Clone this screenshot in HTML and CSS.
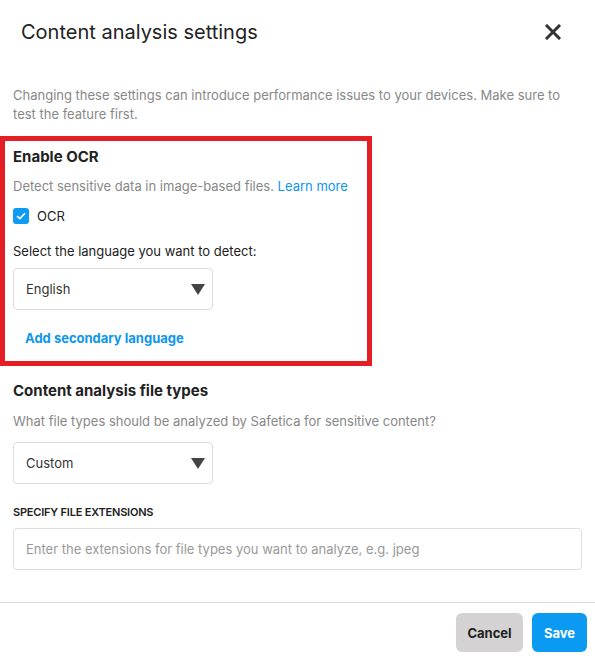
FILE: index.html
```html
<!DOCTYPE html>
<html lang="en">
<head>
  <meta charset="UTF-8">
  <meta name="viewport" content="width=device-width, initial-scale=1.0">
  <title>Content analysis settings</title>
  <link rel="stylesheet" href="styles.css">
</head>

<body>
  <div class="header">
    <h1>Content analysis settings</h1>
    <button class="close" aria-label="Close">
      <svg width="16" height="16" viewBox="0 0 16 16">
        <path d="M2 2 L14 14 M14 2 L2 14" stroke="#333" stroke-width="3" stroke-linecap="square"/>
      </svg>
    </button>
  </div>

  <div class="content">
    <p class="intro">Changing these settings can introduce performance issues to your devices. Make sure to test the feature first.</p>

    <!-- OCR section (highlighted) -->
    <div class="ocr-section">
      <h2>Enable OCR</h2>
      <p class="hint">Detect sensitive data in image-based files. <a href="#">Learn more</a></p>
      <label class="check-row">
        <span class="checkbox">
          <svg width="10" height="8" viewBox="0 0 10 8">
            <path d="M1 4 L3.8 6.6 L9 1.2" stroke="#fff" stroke-width="1.6" fill="none"/>
          </svg>
        </span>
        OCR
      </label>
      <p class="label">Select the language you want to detect:</p>
      <div class="select">
        <span>English</span>
        <span class="arrow"></span>
      </div>
      <a href="#" class="add-link">Add secondary language</a>
    </div>

    <h2 class="section-title">Content analysis file types</h2>
    <p class="hint hint-types">What file types should be analyzed by Safetica for sensitive content?</p>
    <div class="select">
      <span>Custom</span>
      <span class="arrow"></span>
    </div>

    <p class="caps">Specify file extensions</p>
    <div class="text-input">Enter the extensions for file types you want to analyze, e.g. jpeg</div>
  </div>

  <div class="footer">
    <button class="btn btn-cancel">Cancel</button>
    <button class="btn btn-save">Save</button>
  </div>
</body>
</html>
```

FILE: styles.css
```css
body {
  font-family: Inter, "Noto Sans", sans-serif;
  margin: 0;
  background-color: #fff;
  color: #222;
  width: 595px;
}
p {
  margin: 0;
}
.header {
  height: 64px;
  display: flex;
  align-items: center;
  justify-content: space-between;
  padding: 0 34px 0 21px;
}
.header h1 {
  margin: 0;
  font-size: 20px;
  font-weight: 400;
  color: #222;
}
.close {
  border: none;
  background: none;
  padding: 0;
  width: 16px;
  height: 16px;
  cursor: pointer;
}
.close svg {
  display: block;
}
.content {
  padding: 0 13px;
}
.intro {
  margin-top: 22px;
  font-size: 13px;
  line-height: 19px;
  color: #888;
}
.ocr-section {
  margin: 12px -13px 0;
  width: 372px;
  box-sizing: border-box;
  border: 5px solid #e51d25;
  padding: 6px 8px 13px;
}
h2 {
  margin: 0;
  font-size: 15px;
  line-height: 20px;
  font-weight: 700;
  color: #222;
}
.hint {
  margin-top: 10px;
  font-size: 13px;
  line-height: 19px;
  color: #888;
}
.hint a {
  color: #0d96ec;
  text-decoration: none;
}
.hint-types {
  margin-top: 11px;
}
.check-row {
  margin-top: 10px;
  height: 20px;
  display: flex;
  align-items: center;
  gap: 8px;
  font-size: 13px;
  color: #222;
}
.checkbox {
  width: 16px;
  height: 16px;
  border-radius: 3px;
  background-color: #0d9bf4;
  display: flex;
  align-items: center;
  justify-content: center;
}
.label {
  margin-top: 16px;
  font-size: 13px;
  line-height: 19px;
  color: #222;
}
.select {
  margin-top: 7px;
  width: 200px;
  height: 42px;
  box-sizing: border-box;
  border: 1px solid #ddd;
  border-radius: 4px;
  padding: 0 7px 0 12px;
  display: flex;
  align-items: center;
  justify-content: space-between;
  font-size: 13px;
  color: #333;
}
.content > .select {
  margin-top: 11px;
}
.arrow {
  width: 0;
  height: 0;
  border-left: 7px solid transparent;
  border-right: 7px solid transparent;
  border-top: 11px solid #444;
}
.add-link {
  display: block;
  margin-top: 19px;
  padding-left: 12px;
  font-size: 13px;
  line-height: 19px;
  font-weight: 700;
  color: #0d96ec;
  text-decoration: none;
}
.section-title {
  margin-top: 15px;
}
.caps {
  margin-top: 20px;
  font-size: 11px;
  line-height: 16px;
  font-weight: 600;
  letter-spacing: -0.2px;
  text-transform: uppercase;
  color: #222;
}
.text-input {
  margin-top: 8px;
  height: 42px;
  box-sizing: border-box;
  border: 1px solid #ddd;
  border-radius: 4px;
  padding: 0 12px;
  display: flex;
  align-items: center;
  font-size: 13px;
  color: #999;
}
.footer {
  margin-top: 32px;
  border-top: 1px solid #ddd;
  padding: 10px 8px 0;
  display: flex;
  justify-content: flex-end;
  gap: 9px;
}
.btn {
  height: 39px;
  border: none;
  border-radius: 6px;
  font-family: inherit;
  font-size: 13px;
  font-weight: 700;
  cursor: pointer;
}
.btn-cancel {
  width: 67px;
  background-color: #d4d2d2;
  color: #222;
}
.btn-save {
  width: 55px;
  background-color: #0a9af2;
  color: #fff;
}
```
